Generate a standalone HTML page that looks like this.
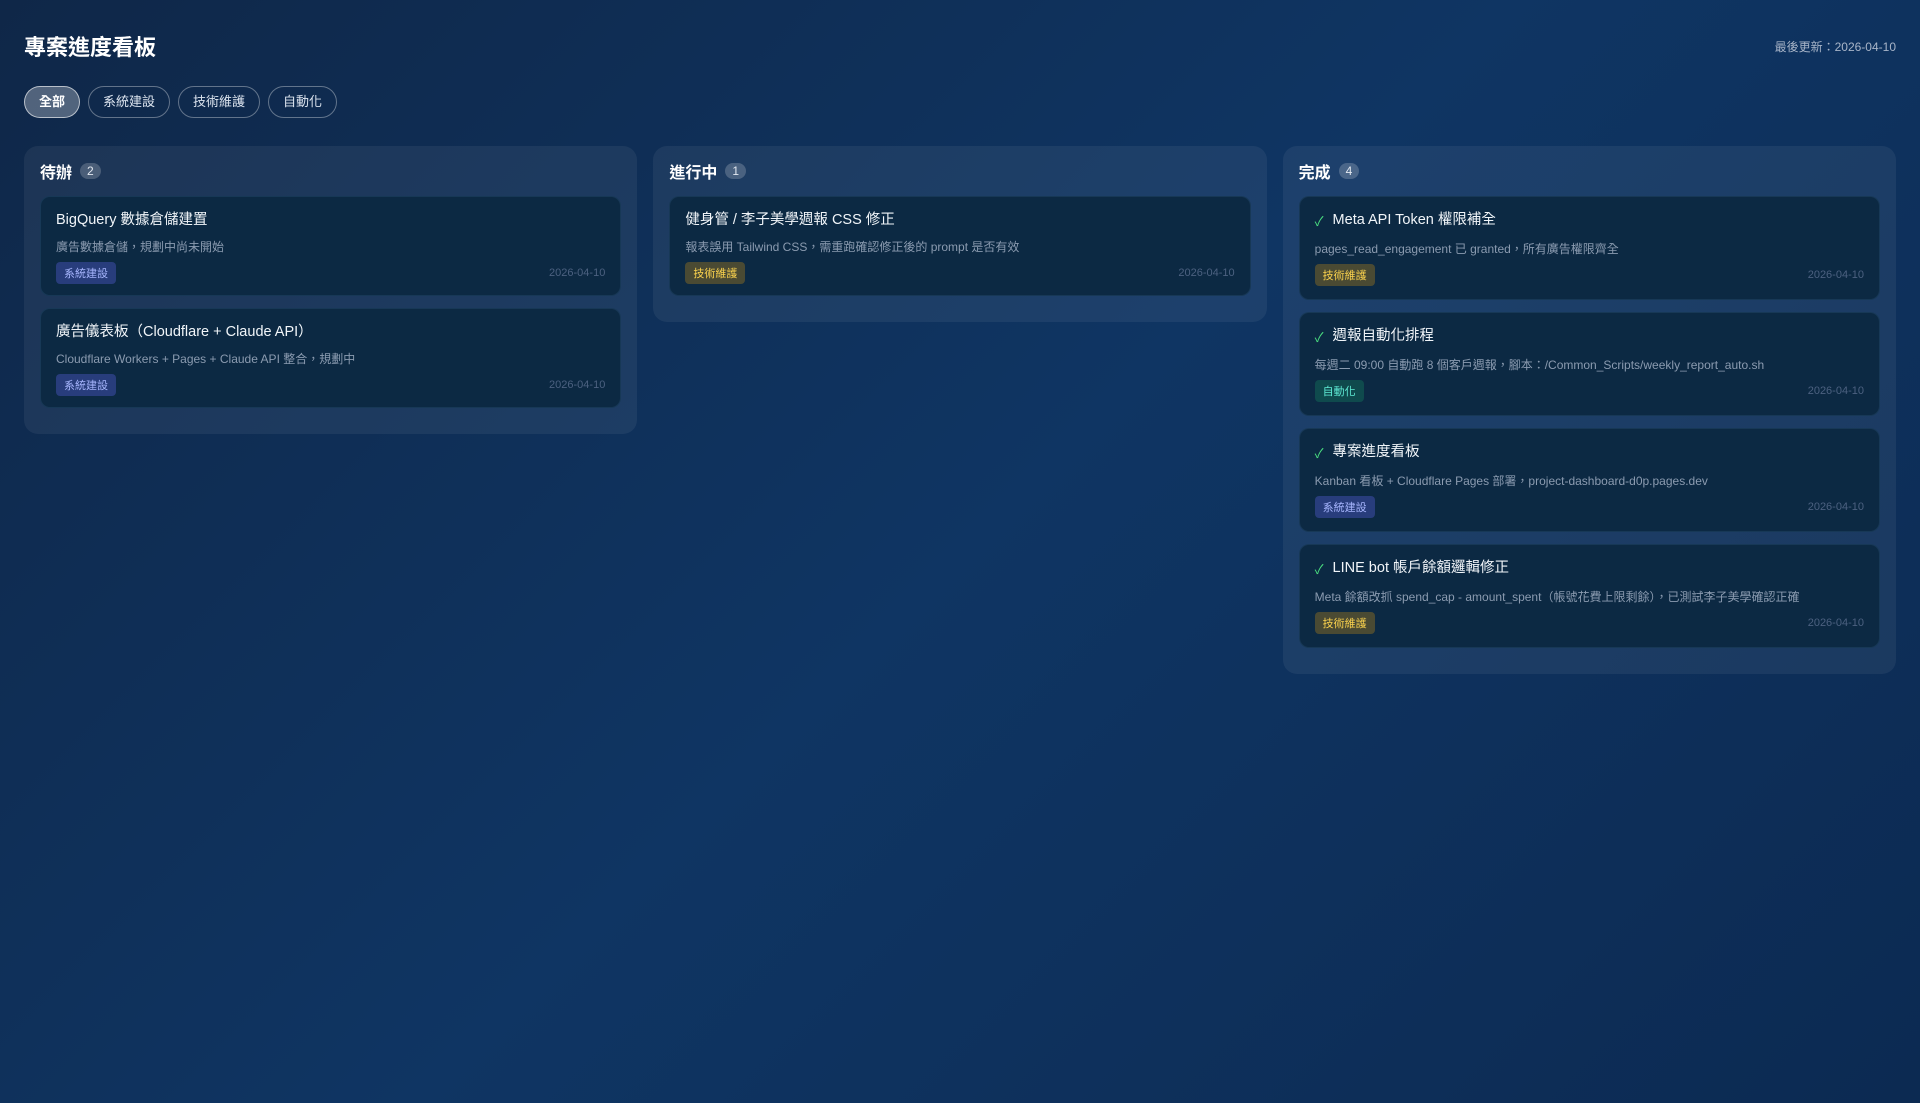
<!DOCTYPE html>
<html><head><meta charset="utf-8"><style>
*{box-sizing:border-box;margin:0;padding:0}
body{width:1920px;height:1080px;overflow:hidden;font-family:"Liberation Sans","Noto Sans CJK TC",sans-serif;color:#e2e8f0;background:linear-gradient(135deg,#0f2748 0%,#0f3563 50%,#0c2a52 100%);padding:0 24px}
.hdr{display:flex;justify-content:space-between;align-items:center;height:46px;margin-top:23px}
h1{font-size:22px;font-weight:700;color:#fff}
.upd{font-size:12px;color:#a8b5c8}
.pills{display:flex;gap:8px;margin-top:17px}
.pill{height:32px;padding:0 14px;border:1px solid rgba(255,255,255,.35);border-radius:16px;font-size:13px;line-height:30px;color:#dbe3ee}
.pill.on{background:rgba(255,255,255,.28);border-color:rgba(255,255,255,.6);color:#fff;font-weight:700}
.cols{display:flex;gap:16px;margin-top:28px;align-items:flex-start}
.col{flex:1;background:rgba(255,255,255,.06);border-radius:14px;padding:16px 16px 26px}
.ch{display:flex;align-items:center;gap:8px;height:18px;margin-bottom:16px;font-size:16px;font-weight:700;color:#fff}
.badge{font-size:12px;font-weight:400;background:rgba(255,255,255,.2);border-radius:9px;padding:1px 7px;color:#e2e8f0}
.card{background:#0c2943;border:1px solid rgba(80,130,180,.18);border-radius:10px;padding:13px 15px 12px;margin-bottom:12px;height:100px}
.col .card:last-child{margin-bottom:0}
.done .card{height:104px}
.t{font-size:14.5px;color:#f1f5f9;height:20px;line-height:20px}
.ck{color:#4ade80;margin-right:9px;font-size:13px;display:inline-block;position:relative;top:2px}
.d{font-size:12px;color:#8b9bb0;margin-top:8px;height:16px}
.done .d{margin-top:10px}
.f{display:flex;justify-content:space-between;align-items:center;margin-top:8px}
.tag{font-size:11px;border-radius:4px;padding:3px 8px}
.sys{background:#283d7c;color:#a5b4fc}
.tech{background:#4a4a33;color:#fcd34d}
.auto{background:#0f4a4d;color:#5eead4}
.dt{font-size:11px;color:#4c6180}
</style></head><body>
<div class="hdr"><h1>專案進度看板</h1><div class="upd">最後更新：2026-04-10</div></div>
<div class="pills"><div class="pill on">全部</div><div class="pill">系統建設</div><div class="pill">技術維護</div><div class="pill">自動化</div></div>
<div class="cols">
<div class="col"><div class="ch">待辦 <span class="badge">2</span></div>
<div class="card"><div class="t">BigQuery 數據倉儲建置</div><div class="d">廣告數據倉儲，規劃中尚未開始</div><div class="f"><span class="tag sys">系統建設</span><span class="dt">2026-04-10</span></div></div>
<div class="card"><div class="t">廣告儀表板（Cloudflare + Claude API）</div><div class="d">Cloudflare Workers + Pages + Claude API 整合，規劃中</div><div class="f"><span class="tag sys">系統建設</span><span class="dt">2026-04-10</span></div></div>
</div>
<div class="col"><div class="ch">進行中 <span class="badge">1</span></div>
<div class="card"><div class="t">健身管 / 李子美學週報 CSS 修正</div><div class="d">報表誤用 Tailwind CSS，需重跑確認修正後的 prompt 是否有效</div><div class="f"><span class="tag tech">技術維護</span><span class="dt">2026-04-10</span></div></div>
</div>
<div class="col done"><div class="ch">完成 <span class="badge">4</span></div>
<div class="card"><div class="t"><span class="ck">✓</span>Meta API Token 權限補全</div><div class="d">pages_read_engagement 已 granted，所有廣告權限齊全</div><div class="f"><span class="tag tech">技術維護</span><span class="dt">2026-04-10</span></div></div>
<div class="card"><div class="t"><span class="ck">✓</span>週報自動化排程</div><div class="d">每週二 09:00 自動跑 8 個客戶週報，腳本：/Common_Scripts/weekly_report_auto.sh</div><div class="f"><span class="tag auto">自動化</span><span class="dt">2026-04-10</span></div></div>
<div class="card"><div class="t"><span class="ck">✓</span>專案進度看板</div><div class="d">Kanban 看板 + Cloudflare Pages 部署，project-dashboard-d0p.pages.dev</div><div class="f"><span class="tag sys">系統建設</span><span class="dt">2026-04-10</span></div></div>
<div class="card"><div class="t"><span class="ck">✓</span>LINE bot 帳戶餘額邏輯修正</div><div class="d">Meta 餘額改抓 spend_cap - amount_spent（帳號花費上限剩餘），已測試李子美學確認正確</div><div class="f"><span class="tag tech">技術維護</span><span class="dt">2026-04-10</span></div></div>
</div>
</div>
</body></html>
